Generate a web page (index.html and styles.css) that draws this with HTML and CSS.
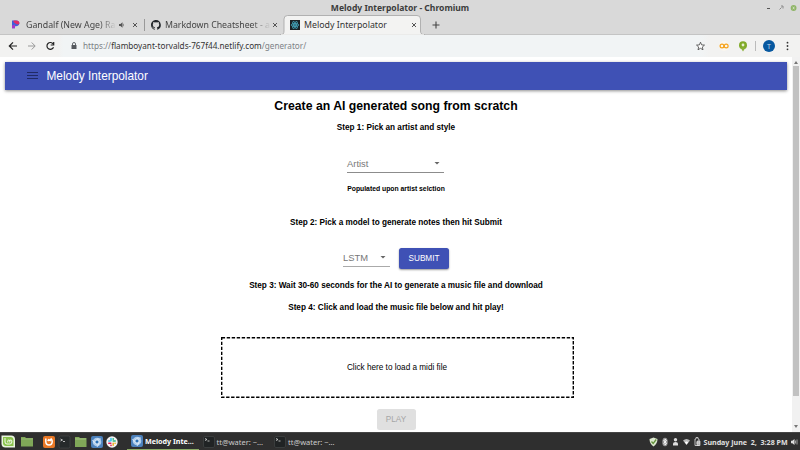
FILE: index.html
```html
<!DOCTYPE html>
<html lang="en">
<head>
<meta charset="utf-8">
<title>Melody Interpolator</title>
<link rel="stylesheet" href="styles.css">
</head>
<body>
<header class="titlebar">
  <span class="window-title">Melody Interpolator - Chromium</span>
  <div class="window-controls">
    <svg width="34" height="8" viewBox="0 0 34 8"><path d="M1 4.500h3" stroke="#555" fill="none"/><path d="M15 2h2v2.500M13.500 5.500l2-2" stroke="#777" stroke-width=".8" fill="none"/><circle cx="27.600" cy="4" r="2.900" fill="#8fb568"/><path d="M26.700 3.100l1.800 1.800m0-1.800l-1.800 1.800" stroke="#edf3e6" stroke-width=".8"/></svg>
  </div>
</header>
<nav class="tabs">
  <div class="tab tab-one">
    <svg class="favicon" width="8" height="9" viewBox="0 0 8 9"><path d="M0 .5h4.200C6.500 .5 7.700 2 7.300 3.800 7 5.400 5.800 6.200 4 6.200H2.900V8.300H0z" fill="#3f5edb"/><path d="M1.500 .5H4.200C6.500 .5 7.700 2 7.300 3.800 6 5 4 4.500 1.500 2z" fill="#e02c68"/><path d="M0 5.500l3-1V8.300H0z" fill="#a538c9"/></svg>
    <span class="tab-label fade">Gandalf (New Age) Ra</span>
    <svg class="speaker" width="6" height="6" viewBox="0 0 6 6"><path d="M0 2h1.500L3.500 .3v5.400L1.500 4H0z" fill="#555"/><path d="M4.500 1.800v2.400" stroke="#777" stroke-width=".7"/></svg>
    <svg class="close" width="6" height="6" viewBox="0 0 6 6"><path d="M1 1l4 4m0-4L1 5" stroke="#555"/></svg>
  </div>
  <div class="tab tab-two">
    <svg class="favicon" width="10" height="10" viewBox="0 0 16 16"><path fill="#202428" d="M8 0C3.580 0 0 3.580 0 8c0 3.540 2.290 6.530 5.470 7.590.4.070.550-.170.550-.380v-1.490c-2.230.480-2.700-1.070-2.700-1.070-.360-.920-.890-1.170-.890-1.170-.730-.500.050-.490.050-.490.810.060 1.230.830 1.230.830.720 1.230 1.880.870 2.340.660.070-.520.280-.870.500-1.070-1.780-.200-3.640-.890-3.640-3.950 0-.870.310-1.590.820-2.150-.080-.200-.360-1.020.080-2.120 0 0 .670-.210 2.200.820a7.700 7.700 0 0 1 4 0c1.530-1.040 2.200-.820 2.200-.820.440 1.100.160 1.920.080 2.120.510.560.820 1.270.820 2.150 0 3.070-1.870 3.750-3.650 3.950.290.250.540.730.540 1.480v2.190c0 .210.150.460.550.380A8 8 0 0 0 8 0z"/></svg>
    <span class="tab-label fade">Markdown Cheatsheet - a</span>
    <svg class="close" width="6" height="6" viewBox="0 0 6 6"><path d="M1 1l4 4m0-4L1 5" stroke="#555"/></svg>
  </div>
  <div class="tab tab-active">
    <svg class="tab-shape" width="148" height="20" viewBox="0 0 148 20"><path d="M0 20C3 20 4 18.500 4 16V4Q4 .5 7.500 .5H137Q140.500 .5 140.500 4V16C140.500 18.500 142 20 145 20z" fill="#f3f3f2" stroke="#aaa" stroke-width=".9"/><path d="M1 20H144" stroke="#f3f3f2" stroke-width="1.500"/></svg>
    <svg class="favicon" width="10" height="10" viewBox="0 0 10 10"><path fill="#1b2225" d="M0 0h10v10H0z"/><g fill="none" stroke="#43a9bf" stroke-width=".75"><ellipse cx="5" cy="5" rx="4" ry="1.500"/><ellipse cx="5" cy="5" rx="4" ry="1.500" transform="rotate(60 5 5)"/><ellipse cx="5" cy="5" rx="4" ry="1.500" transform="rotate(120 5 5)"/></g><circle cx="5" cy="5" r=".8" fill="#61dafb"/></svg>
    <span class="tab-label">Melody Interpolator</span>
    <svg class="close" width="6" height="6" viewBox="0 0 6 6"><path d="M1 1l4 4m0-4L1 5" stroke="#555"/></svg>
  </div>
  <svg class="new-tab" width="8" height="8" viewBox="0 0 8 8"><path d="M4 .5v7M.5 4h7" stroke="#444" stroke-width="1.100"/></svg>
</nav>
<div class="toolbar">
  <svg class="nav-icons" width="50" height="12" viewBox="0 0 50 12" fill="none" stroke-width="1.200"><path d="M9 6H1.500M5 2.300L1.300 6 5 9.700" stroke="#222"/><path d="M20 6h7M23.700 2.500L27.200 6l-3.500 3.500" stroke="#999" stroke-width="1"/><path d="M45.200 4A3.400 3.400 0 1 0 45.500 7.200M45.700 2v3H42.700" stroke="#222"/></svg>
  <svg class="lock" width="6" height="8" viewBox="0 0 6 8"><path d="M.5 3h5v4h-5z" fill="#55595e"/><path d="M1.500 3.300V2a1.500 1.500 0 0 1 3 0v1.300" stroke="#55595e" stroke-width=".9" fill="none"/></svg>
  <span class="url"><span class="dim">https://</span>flamboyant-torvalds-767f44.netlify.com<span class="dim">/generator/</span></span>
  <svg class="actions" width="100" height="14" viewBox="0 0 100 14"><path d="M5.500 3.200l1.100 2.700 2.900.2-2.200 1.900.7 2.800-2.500-1.500L3 10.800 3.700 8 1.500 6.100l2.900-.2z" fill="#fff" stroke="#555" stroke-width=".9"/><circle cx="29" cy="7" r="5" fill="#faf6ee"/><g fill="none" stroke="#f5a21b" stroke-width="1.200"><circle cx="27" cy="7" r="1.900"/><circle cx="31.200" cy="7" r="1.900"/></g><circle cx="48" cy="6.200" r="4" fill="#80aa28"/><path d="M45.500 8.500h5L48 12.500z" fill="#8bb03a"/><circle cx="48" cy="6" r="1.400" fill="#e7efd1"/><path d="M60.500 2v10" stroke="#bbb"/><circle cx="74" cy="7" r="6" fill="#0758a0"/><g fill="#333"><circle cx="92.500" cy="3.700" r=".9"/><circle cx="92.500" cy="7" r=".9"/><circle cx="92.500" cy="10.300" r=".9"/></g><text class="avatar" x="74" y="9.600" text-anchor="middle">T</text></svg>
</div>
<div class="viewport">
  <main class="page">
    <div class="appbar">
      <svg width="11" height="8" viewBox="0 0 11 8"><path d="M0 .5h11M0 3.500h11M0 6.500h11" stroke="#202a66"/></svg>
      <span class="brand">Melody Interpolator</span>
    </div>
    <h1 class="heading">Create an AI generated song from scratch</h1>
    <h2 class="step step-one">Step 1: Pick an artist and style</h2>
    <div class="select artist"><span>Artist</span><i class="caret"></i></div>
    <h3 class="hint">Populated upon artist selction</h3>
    <h2 class="step step-two">Step 2: Pick a model to generate notes then hit Submit</h2>
    <div class="model-row">
      <div class="select model"><span>LSTM</span><i class="caret"></i></div>
      <button class="button submit">SUBMIT</button>
    </div>
    <h2 class="step step-three">Step 3: Wait 30-60 seconds for the AI to generate a music file and download</h2>
    <h2 class="step step-four">Step 4: Click and load the music file below and hit play!</h2>
    <div class="dropzone"><svg class="dashes" width="353" height="61"><rect x=".7" y=".7" width="351.600" height="59.600" fill="none" stroke="#000" stroke-width="1.400" stroke-dasharray="3.400 1.600"/></svg><span>Click here to load a midi file</span></div>
    <button class="button play" disabled>PLAY</button>
  </main>
  <div class="scrollbar"><i class="up"></i><i class="thumb"></i><i class="down"></i></div>
</div>
<footer class="taskbar">
  <svg class="launchers" width="122" height="17" viewBox="0 0 122 17">
    <path d="M1.500 2.500h9.500q4 0 4 4v8H5.500q-4 0-4-4z" fill="#e9f4df"/><path d="M3 4h7.500q3 0 3 3v6H6q-3 0-3-3z" fill="#8ac34d"/><path d="M5 5v4q0 2 2 2h2.800q2 0 2-2V8q0-1-1-1t-1 1v1.500M9.800 8q0-1-1-1t-1 1v1.500" stroke="#fff" stroke-width=".9" fill="none"/>
    <path d="M21 4h4l1 1h7v8.500H21z" fill="#80a758"/><path d="M21 6h12" stroke="#96b975"/>
    <rect x="43" y="3" width="12" height="12" rx="2" fill="#e97826"/><path d="M45.800 5.500v3q0 3.500 3.200 3.500t3.200-3.500q0-1.500-1-2.500l-1 1.500-1.500-.8-1 1.300" fill="none" stroke="#fff" stroke-width="1.500"/>
    <rect x="59" y="3" width="11" height="12" rx="1.500" fill="#262a2b" stroke="#484b4c" stroke-width=".6"/><path d="M60.500 6l2 1-2 1M63 8.500h2" stroke="#ddd" stroke-width=".8" fill="none"/>
    <path d="M75 4h4l1 1h6.500v9H75z" fill="#80a758"/><path d="M75 6h11" stroke="#a2c080"/>
    <rect x="91" y="3" width="12" height="12" rx="2" fill="#4c81bc"/><circle cx="97" cy="9" r="4.300" fill="#adcceb"/><circle cx="97" cy="9" r="2.100" fill="#2970b6" stroke="#f0f6fc" stroke-width=".9"/><path d="M97 6h4M94.500 10l-2-3M99 10.500L97 14" stroke="#e4effa" stroke-width=".8"/>
    <circle cx="112" cy="9" r="5.700" fill="#f4f1f3"/><g stroke-width="1.600" stroke-linecap="round"><path d="M111 5.500v2.200M108.800 8h1" stroke="#36c5f0"/><path d="M113.200 8h2M113.200 5.800v.4" stroke="#2eb67d"/><path d="M113.200 10.300v2M115 10.300h.2" stroke="#ecb22e"/><path d="M108.800 10.300h2M111 12.300v.1" stroke="#e01e5a"/></g>
  </svg>
  <div class="task task-active"><svg width="12" height="12" viewBox="91 3 12 12"><rect x="91" y="3" width="12" height="12" rx="2" fill="#4c81bc"/><circle cx="97" cy="9" r="4.300" fill="#adcceb"/><circle cx="97" cy="9" r="2.100" fill="#2970b6" stroke="#f0f6fc" stroke-width=".9"/><path d="M97 6h4M94.500 10l-2-3M99 10.500L97 14" stroke="#e4effa" stroke-width=".8"/></svg><span>Melody Inte...</span></div>
  <div class="task"><svg width="12" height="12" viewBox="0 0 12 12"><rect x=".5" y=".5" width="11" height="11" rx="1.500" fill="#202324" stroke="#484b4c" stroke-width=".6"/><path d="M2 2.500l2 1-2 1M4.500 5h2" stroke="#ddd" stroke-width=".8" fill="none"/></svg><span>tt@water: ~...</span></div>
  <div class="task"><svg width="12" height="12" viewBox="0 0 12 12"><rect x=".5" y=".5" width="11" height="11" rx="1.500" fill="#202324" stroke="#484b4c" stroke-width=".6"/><path d="M2 2.500l2 1-2 1M4.500 5h2" stroke="#ddd" stroke-width=".8" fill="none"/></svg><span>tt@water: ~...</span></div>
  <svg class="tray" width="53" height="12" viewBox="0 0 53 12"><path d="M4.500 1.500L8.500 3q0 5-4 7.500Q.5 8 .5 3z" fill="#dce8cf"/><path d="M2.500 5.500l1.700 2 3-4" stroke="#62923a" stroke-width="1.300" fill="none"/><ellipse cx="16" cy="6" rx="2.700" ry="4.300" fill="#999"/><path d="M14.500 4l3 3.500L16 9V3l1.500 1.500-3 3" stroke="#fff" stroke-width=".8" fill="none"/><circle cx="26.500" cy="3.700" r="1.700" fill="#ddd"/><path d="M24 9.500V7.500q0-1.500 2.500-1.500T29 7.500v2z" fill="#ddd"/><path d="M34 4.500Q37.500 1.500 41 4.500L37.500 9z" fill="#bbb"/><path d="M35.800 6.200q1.700-1.500 3.400 0L37.500 8.500z" fill="#fff"/><path d="M46 3h1V1.500h2V3h1v6.500h-4z" fill="none" stroke="#ccc" stroke-width=".9"/><path d="M48 5h3v4.500h-3zM47 7h4" fill="#aaa" stroke="#eee" stroke-width=".6"/></svg>
  <span class="clock">Sunday June&nbsp; 2,&nbsp; 3:28 PM</span>
  <svg class="volume" width="7" height="8" viewBox="0 0 7 8"><path d="M0 2.800h1.300L3.500 1v6L1.300 5.200H0z" fill="#ddd"/><path d="M4.500 2.500v3M6 1.500v5" stroke="#bbb" stroke-width=".8"/></svg>
</footer>
</body>
</html>
```

FILE: styles.css
```css
* { box-sizing: border-box; }
body { margin: 0; width: 800px; height: 450px; overflow: hidden; display: flex; flex-direction: column; background: #fff; font-family: "Noto Sans", sans-serif; }
svg { display: block; flex: none; }
h1, h2, h3 { margin: 0; white-space: nowrap; }

.titlebar { height: 15px; flex: none; display: grid; grid-template-columns: 1fr auto 1fr; align-items: center; background: #d9d9d9; }
.window-title { grid-column: 2; font-size: 8.550px; line-height: 15px; padding-top: 1px; font-weight: 700; color: #3c3c3c; white-space: nowrap; }
.window-controls { justify-self: end; }

.tabs { height: 20px; flex: none; display: flex; align-items: center; background: #d9d9d9; border-bottom: 1px solid #c4c4c4; }
.tab { display: flex; align-items: center; height: 20px; flex: none; position: relative; }
.tab-label { font-size: 8.800px; line-height: 20px; color: #444; white-space: nowrap; }
.fade { -webkit-mask-image: linear-gradient(90deg, #000 82%, transparent); mask-image: linear-gradient(90deg, #000 82%, transparent); }
.tab-one { width: 145px; padding-left: 12px; border-right: 1px solid #999; height: 12px; }
.tab-one .tab-label { width: 90px; margin-left: 6px; }
.speaker { margin-left: 3px; }
.tab-one .close { margin-left: 7px; }
.tab-two { width: 139px; padding-left: 6px; }
.tab-two .tab-label { width: 106px; margin-left: 4px; letter-spacing: -.03px; }
.tab-two .close { margin-left: 1px; }
.tab-active { width: 143px; padding-left: 6px; }
.tab-shape { position: absolute; left: -4px; top: 0; }
.tab-active .favicon, .tab-active .close, .tab-active .tab-label { position: relative; }
.tab-active .tab-label { width: 101px; margin-left: 4px; color: #333; }
.tab-active .close { margin-left: 6px; }
.new-tab { margin-left: 5px; }

.toolbar { height: 22px; flex: none; display: flex; align-items: center; padding-left: 8px; background: linear-gradient(90deg, #f2f2f1 58px, #f1f4f5 64px, #f1f4f5 700px, #f2f2f1 710px); }
.lock { margin-left: 13px; }
.url { margin-left: 6px; width: 612px; font-size: 8.180px; line-height: 22px; color: #333; white-space: nowrap; }
.dim { color: #7d8286; }
.avatar { font: 7px "Noto Sans", sans-serif; fill: #c4d9eb; }

.viewport { flex: 1; min-height: 0; display: flex; background: #fff; }
.page { width: 792px; padding: 5px 5px 0; display: flex; flex-direction: column; align-items: center; font-family: "Liberation Sans", sans-serif; color: #000; }
.appbar { width: 782px; height: 28px; flex: none; display: flex; align-items: center; padding-left: 22px; background: #3f51b5; box-shadow: 0 1px 3px rgba(0,0,0,.45); }
.brand { margin-left: 8.500px; font-size: 11.850px; line-height: 28px; color: #fff; white-space: nowrap; }
.heading { margin-top: 7px; font-size: 12.250px; line-height: 18px; }
.step { font-size: 8.200px; line-height: 12px; }
.step-one { margin-top: 7px; }
.select { display: flex; justify-content: space-between; align-items: center; border-bottom: 1px solid #8c8c8c; color: #777; font-size: 9.400px; }
.artist { width: 97px; height: 19px; margin-top: 20px; margin-right: 1px; padding-right: 4px; }
.caret { width: 6px; height: 3px; background: #666; clip-path: polygon(0 0, 100% 0, 50% 100%); }
.hint { margin-top: 11px; font-size: 6.820px; line-height: 10px; }
.step-two { margin-top: 23px; }
.model-row { display: flex; margin-top: 19px; }
.model { width: 47px; height: 19px; padding-right: 4px; border-bottom-color: #aaa; }
.button { display: flex; align-items: center; justify-content: center; border: 0; border-radius: 2.500px; padding: 0; font: 8.200px "Liberation Sans", sans-serif; }
.submit { width: 50px; height: 21px; margin-left: 9px; background: #3f51b5; color: #fff; box-shadow: 0 1px 2px rgba(0,0,0,.4); }
.step-three { margin-top: 11px; }
.step-four { margin-top: 10px; }
.dropzone { position: relative; width: 353px; height: 61px; flex: none; margin: 23px 0 0 2px; display: flex; align-items: center; justify-content: center; font-size: 8.200px; }
.dashes { position: absolute; inset: 0; }
.play { width: 39px; height: 21px; flex: none; margin: 11px 0 0; background: #e0e0e0; color: #a6a6a6; }

.scrollbar { width: 8px; flex: none; display: flex; flex-direction: column; align-items: center; background: #f1f1f1; padding: 4px 0; }
.up, .down { width: 4px; height: 3px; background: #777; clip-path: polygon(50% 0, 100% 100%, 0 100%); }
.thumb { width: 6px; height: 330px; margin-top: 2px; background: #c1c1c1; }
.down { margin-top: auto; clip-path: polygon(0 0, 100% 0, 50% 100%); }

.taskbar { height: 18px; flex: none; display: flex; align-items: center; background: #2f2f2f; border-top: 1px solid #454545; font-size: 7.500px; color: #ccc; white-space: nowrap; }
.launchers { margin-right: 5px; }
.task { display: flex; align-items: center; width: 71.500px; height: 17px; padding-left: 4px; gap: 2px; flex: none; }
.task-active { border-bottom: 1px solid #8bab65; color: #fff; font-weight: 700; font-size: 7.150px; }
.tray { margin-left: 307px; }
.clock { margin-left: 2px; width: 85px; font-weight: 700; font-size: 7.100px; color: #e0e0e0; }
.volume { margin-left: 2px; }
```
